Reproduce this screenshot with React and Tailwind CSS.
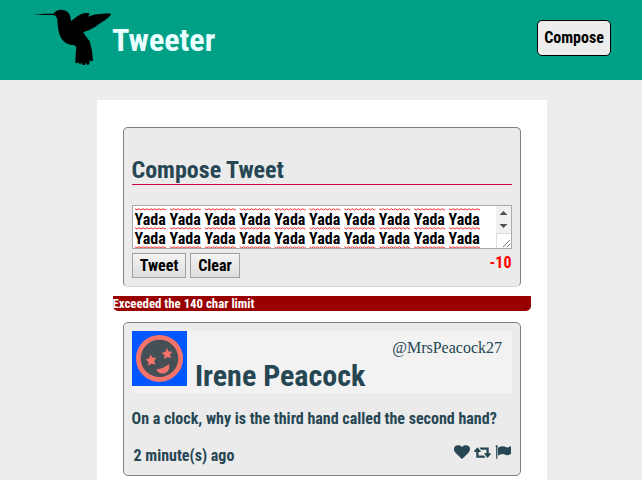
import React from "react";

const words = Array.from({ length: 10 }, (_, i) => i);

function Squiggles() {
  return (
    <svg width="360" height="3" className="block shrink-0" aria-hidden="true">
      {words.map((i) => (
        <path
          key={i}
          d={`M${i * 34.9} 0.7 l2 1.3 l2 -1.3 l2 1.3 l2 -1.3 l2 1.3 l2 -1.3 l2 1.3 l2 -1.3 l2 1.3 l2 -1.3 l2 1.3 l2 -1.3 l2 1.3 l2 -1.3 l2 1.3 l1 -0.7`}
          fill="none"
          stroke="#ff2a2a"
          strokeWidth="1"
        />
      ))}
    </svg>
  );
}

function YadaLine() {
  return (
    <div className="flex h-4 items-center whitespace-nowrap pt-0.5 text-base leading-4 text-black">
      {words.map((i) => (
        <span key={i} className="w-[34.9px] shrink-0">Yada</span>
      ))}
    </div>
  );
}

function Hummingbird() {
  return (
    <svg width="85" height="65" viewBox="0 0 255 195" aria-hidden="true">
      <path d="M10 29 L42 26 L70 26 C78 16 91 12 103 16 C115 20 122 30 122 42 L124 48 C135 38 151 26 165 24 L178 24 L175 35 C193 27 222 25 243 26 C242 35 222 47 207 57 C194 67 181 76 160 81 L163 88 L179 109 L186 137 L189 167 L182 169 L179 165 L178 178 L172 180 L167 173 L165 180 L158 180 L154 173 L151 178 L146 175 L144 170 L142 175 L136 174 L137 147 L139 126 L132 120 C119 122 103 113 96 103 C86 88 83 66 82 44 C80 35 76 31 69 30 Z" fill="#000" />
    </svg>
  );
}

function Avatar() {
  return (
    <svg width="55" height="55" viewBox="0 0 55 55" className="block shrink-0 bg-[#0056ff]" aria-hidden="true">
      <circle cx="27.5" cy="27.4" r="21.100" fill="#454f56" stroke="#f4736b" strokeWidth="4.800" />
      <path d="M18.500 23.500 L20.700 26.700 L24.300 26.700 L22.200 29.800 L23.500 33.700 L19.500 32.700 L16.300 34.800 L16.500 30.900 L13.700 28.500 L17.300 27.300 Z" fill="#f4736b" />
      <path d="M34.800 17 L36.700 20.600 L40.300 20.700 L37.900 23.500 L39.300 27.300 L35.500 26 L32.200 28.200 L32.500 24.300 L29.400 21.800 L33.300 20.900 Z" fill="#f4736b" />
      <path d="M24.300 38.500 C29 37.800 33.500 36 36.900 32.900 C38.500 38.500 35 42.500 30.500 42.500 C27.500 42.500 25.300 41 24.300 38.500 Z" fill="#f4736b" />
    </svg>
  );
}

function HeartIcon() {
  return (
    <svg width="16" height="16" viewBox="0 0 1792 1792" aria-hidden="true">
      <path fill="currentColor" d="M896 1664q-26 0-44-18l-624-602q-10-8-27.500-26T145 952.500 77 855 23.500 734 0 596q0-220 127-344t351-124q62 0 126.500 21.500t120 58T820 276t76 68q36-36 76-68t95.500-68.500 120-58T1314 128q224 0 351 124t127 344q0 221-229 450l-623 600q-18 18-44 18z" />
    </svg>
  );
}

function RetweetIcon() {
  return (
    <svg width="17" height="16" viewBox="0 0 1920 1792" aria-hidden="true">
      <path fill="currentColor" d="M1280 1504q0 13-9.500 22.500T1248 1536H288q-8 0-13.500-2t-9-7-5.500-8-3-11.500-1-11.500V896H64q-26 0-45-19T0 832q0-24 15-41l320-384q19-22 49-22t49 22l320 384q15 17 15 41 0 26-19 45t-45 19H512v384h576q16 0 25 11l160 192q7 10 7 21zm640-416q0 24-15 41l-320 384q-20 23-49 23t-49-23l-320-384q-15-17-15-41 0-26 19-45t45-19h192V640H832q-16 0-25-12L647 436q-7-9-7-20 0-13 9.500-22.500T672 384h960q8 0 13.500 2t9 7 5.500 8 3 11.500 1 11.500v600h192q26 0 45 19t19 45z" />
    </svg>
  );
}

function FlagIcon() {
  return (
    <svg width="16" height="16" viewBox="0 0 1792 1792" aria-hidden="true">
      <path fill="currentColor" d="M320 256q0 72-64 110v1266q0 13-9.500 22.500T224 1664h-64q-13 0-22.500-9.500T128 1632V366q-64-38-64-110 0-53 37.500-90.500T192 128t90.500 37.500T320 256zm1472 64v763q0 25-12.500 38.500T1740 1149q-215 116-369 116-61 0-123.500-22t-108.500-48-115.500-48-142.500-22q-192 0-464 146-17 9-33 9-26 0-45-19t-19-45V474q0-32 31-55 21-14 79-43 236-120 421-120 107 0 200 29t219 88q38 19 88 19 54 0 117.500-21t110-47 88-47 54.500-21q26 0 45 19t19 45z" />
    </svg>
  );
}

export default function App() {
  return (
    <div className="h-[480px] w-[642px] overflow-hidden bg-[#ededed] font-['Roboto_Condensed',Roboto,sans-serif] font-bold text-[#264653] [font-stretch:75%]">
      <header className="flex h-20 items-start bg-[#00a087] pl-[30px] pr-[31px]">
        <div className="pt-[5px]"><Hummingbird /></div>
        <h1 className="-ml-[3px] pt-5 text-[32px] leading-10 text-[#e8feff]">Tweeter</h1>
        <button className="ml-auto mt-5 h-9 w-[74px] whitespace-nowrap rounded-[5px] border border-black bg-[#ededed] text-base leading-5 text-black">Compose</button>
      </header>

      <main className="ml-[97px] mt-5 h-[380px] w-[450px] bg-white pt-[27px]">
        <section className="ml-[26px] h-40 w-[398px] rounded-[5px] border border-[#808080] border-b-[#d8d8d8] bg-[#ebebeb] px-2 pt-7">
          <h2 className="h-[29px] whitespace-nowrap border-b border-[#d6003c] text-2xl leading-[28px]"><span className="-ml-[0.5px]">Compose Tweet</span></h2>
          <div className="mt-5 flex h-11 border border-[#a9a9a9] bg-white">
            <div className="flex flex-1 flex-col overflow-hidden pl-[1.6px] pt-0.5">
              <Squiggles />
              <YadaLine />
              <Squiggles />
              <YadaLine />
              <Squiggles />
            </div>
            <svg width="15" height="42" viewBox="0 0 15 42" className="shrink-0" aria-hidden="true">
              <path d="M0 0h15v27H0z" fill="#f1f1f1" />
              <path d="M0 27.500h15M.5 27v15" stroke="#dcdcdc" />
              <path d="M3.500 9h8L7.500 5zM3.500 18h8l-4 4z" fill="#505050" />
              <path d="M7 41l7-7M11 41l3-3" stroke="#777" fill="none" />
            </svg>
          </div>
          <div className="mt-1 flex items-start">
            <button className="h-[25px] w-[54px] border border-[#a0a0a0] bg-linear-to-b from-[#f4f4f4] to-[#dddddd] text-base leading-[23px] text-black">Tweet</button>
            <button className="ml-1 h-[25px] w-[50px] border border-[#a0a0a0] bg-linear-to-b from-[#f4f4f4] to-[#dddddd] text-base leading-[23px] text-black">Clear</button>
            <span className="ml-auto mr-[0.5px] text-base leading-5 text-[#ff0000]">-10</span>
          </div>
        </section>

        <div className="ml-4 mt-[9px] h-[15px] w-[418px] rounded-b-[5px] bg-[#990000] text-[12.8px] leading-[15px] text-white"><span className="-ml-[0.5px]">Exceeded the 140 char limit</span></div>

        <article className="ml-[26px] mt-[11px] h-[154px] w-[398px] rounded-[5px] border border-[#808080] bg-[#ebebeb] px-2 pt-2">
          <header className="flex h-[62px] items-start bg-[#f2f2f2]">
            <Avatar />
            <h2 className="ml-2 whitespace-nowrap pt-[27px] text-[30px] leading-[35px]">Irene Peacock</h2>
            <span className="ml-auto mr-2.5 pt-2 font-['Liberation_Serif',serif] text-base font-normal leading-[18px] [font-stretch:normal]">@MrsPeacock27</span>
          </header>
          <p className="-ml-[0.5px] mt-4 whitespace-nowrap text-base leading-5">On a clock, why is the third hand called the second hand?</p>
          <footer className="mt-[15px] flex h-5 items-center pl-[1.5px]">
            <span className="pt-1 text-base leading-5">2 minute(s) ago</span>
            <div className="-mt-1 ml-auto mr-px flex items-center gap-1">
              <HeartIcon />
              <RetweetIcon />
              <FlagIcon />
            </div>
          </footer>
        </article>
      </main>
    </div>
  );
}
